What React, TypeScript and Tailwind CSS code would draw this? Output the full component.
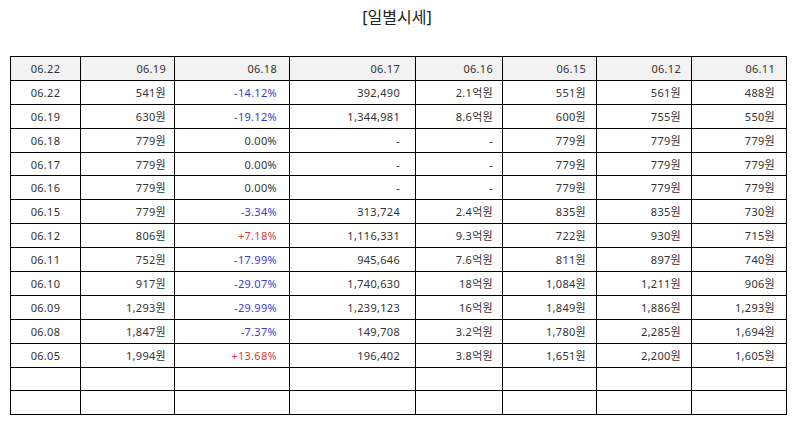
const headers = ['06.22', '06.19', '06.18', '06.17', '06.16', '06.15', '06.12', '06.11']

type Row = [string, string, string, string, string, string, string, string]

const rows: Row[] = [
  ['06.22', '541원', '-14.12%', '392,490', '2.1억원', '551원', '561원', '488원'],
  ['06.19', '630원', '-19.12%', '1,344,981', '8.6억원', '600원', '755원', '550원'],
  ['06.18', '779원', '0.00%', '-', '-', '779원', '779원', '779원'],
  ['06.17', '779원', '0.00%', '-', '-', '779원', '779원', '779원'],
  ['06.16', '779원', '0.00%', '-', '-', '779원', '779원', '779원'],
  ['06.15', '779원', '-3.34%', '313,724', '2.4억원', '835원', '835원', '730원'],
  ['06.12', '806원', '+7.18%', '1,116,331', '9.3억원', '722원', '930원', '715원'],
  ['06.11', '752원', '-17.99%', '945,646', '7.6억원', '811원', '897원', '740원'],
  ['06.10', '917원', '-29.07%', '1,740,630', '18억원', '1,084원', '1,211원', '906원'],
  ['06.09', '1,293원', '-29.99%', '1,239,123', '16억원', '1,849원', '1,886원', '1,293원'],
  ['06.08', '1,847원', '-7.37%', '149,708', '3.2억원', '1,780원', '2,285원', '1,694원'],
  ['06.05', '1,994원', '+13.68%', '196,402', '3.8억원', '1,651원', '2,200원', '1,605원'],
  ['', '', '', '', '', '', '', ''],
  ['', '', '', '', '', '', '', ''],
]

// column widths and right padding, measured off the grid lines
const cols = [
  { w: 'w-[70px]', cell: 'text-center' },
  { w: 'w-[94px]', cell: 'text-right pr-[8px]' },
  { w: 'w-[115px]', cell: 'text-right pr-[12px]' },
  { w: 'w-[126px]', cell: 'text-right pr-[15px]' },
  { w: 'w-[87px]', cell: 'text-right pr-[9px]' },
  { w: 'w-[94px]', cell: 'text-right pr-[10px]' },
  { w: 'w-[95px]', cell: 'text-right pr-[10px]' },
  { w: 'w-[95px]', cell: 'text-right pr-[11px]' },
]

function rateColor(v: string) {
  if (v.startsWith('+')) return 'text-[#e23a3a]'
  if (v.startsWith('-') && v !== '-') return 'text-[#3b3bd0]'
  return ''
}

export default function App() {
  return (
    <div
      className="w-[794px] h-[425px] bg-white text-[#333] pt-[6px] px-[10px]"
      style={{ fontFamily: '"Noto Sans", "Noto Sans CJK KR", sans-serif' }}
    >
      <h1 className="text-center text-[16px] leading-[22px] text-[#222] mb-[28px]">[일별시세]</h1>

      <table className="w-[777px] border-collapse table-fixed text-[11px] leading-none tracking-[0.3px]">
        <colgroup>
          {cols.map((c, i) => (
            <col key={i} className={c.w} />
          ))}
        </colgroup>
        <thead>
          <tr className="h-[23.9px] bg-[#f2f2f2]">
            {headers.map((h, i) => (
              <th key={i} className={`border border-black font-normal ${cols[i].cell}`}>
                {h}
              </th>
            ))}
          </tr>
        </thead>
        <tbody>
          {rows.map((r, ri) => (
            <tr key={ri} className="h-[23.9px]">
              {r.map((v, ci) => (
                <td key={ci} className={`border border-black ${cols[ci].cell} ${ci === 2 ? rateColor(v) : ''}`}>
                  {v}
                </td>
              ))}
            </tr>
          ))}
        </tbody>
      </table>
    </div>
  )
}
